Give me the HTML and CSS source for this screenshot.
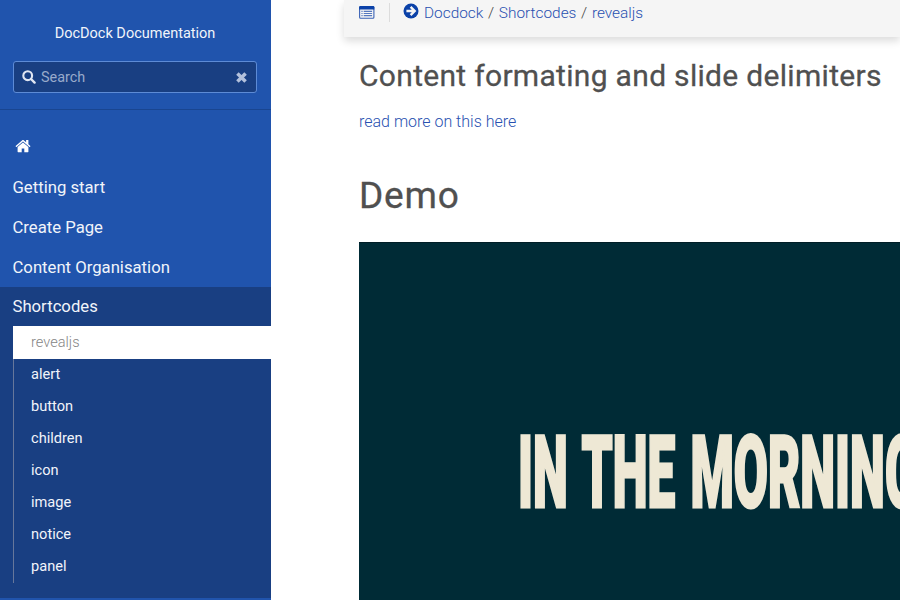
FILE: index.html
```html
<!DOCTYPE html>
<html lang="en">
<head>
<meta charset="utf-8">
<title>revealjs - DocDock Documentation</title>
<link rel="stylesheet" href="styles.css">
</head>
<body>
<div class="page">
  <aside class="sidebar">
    <header class="brand">
      <div class="brand-name">DocDock Documentation</div>
      <div class="search">
        <svg class="search-icon" viewBox="0 0 14 14"><circle cx="5.7" cy="5.7" r="4.4" fill="none" stroke="currentColor" stroke-width="2.1"/><path d="M9 9l3.6 3.6" stroke="currentColor" stroke-width="2.4" stroke-linecap="round"/></svg>
        <span class="search-text">Search</span>
        <svg class="clear-icon" viewBox="0 0 10 10"><path d="M1.3 1.3l7.4 7.4M8.7 1.3L1.3 8.7" stroke="currentColor" stroke-width="3.2"/></svg>
      </div>
    </header>
    <nav class="menu">
      <a class="menu-item"><svg class="home-icon" viewBox="0 0 16 14"><path fill="currentColor" d="M8 3.6L2.6 8v4.8c0 .3.2.5.5.5h3.6V9.6h2.6v3.7h3.6c.3 0 .5-.2.5-.5V8zM15.4 6.9L13.4 5.2V1.3c0-.2-.1-.3-.3-.3h-1.7c-.2 0-.3.1-.3.3v1.9L9 1.4c-.6-.5-1.4-.5-2 0L.6 6.9c-.1.1-.1.3 0 .4l.5.6c.1.1.3.1.4 0L8 2.5l6.5 5.4c.1.1.3.1.4 0l.5-.6c.1-.1.1-.3 0-.4z"/></svg></a>
      <a class="menu-item">Getting start</a>
      <a class="menu-item">Create Page</a>
      <a class="menu-item">Content Organisation</a>
      <div class="menu-group">
        <a class="menu-item">Shortcodes</a>
        <div class="submenu">
          <a class="sub-item active">revealjs</a>
          <a class="sub-item">alert</a>
          <a class="sub-item">button</a>
          <a class="sub-item">children</a>
          <a class="sub-item">icon</a>
          <a class="sub-item">image</a>
          <a class="sub-item">notice</a>
          <a class="sub-item">panel</a>
        </div>
      </div>
    </nav>
  </aside>
  <main class="body">
    <div class="topbar">
      <svg class="toc-icon" viewBox="0 0 16 13"><rect x=".6" y=".6" width="14.3" height="11.6" rx="1" fill="#f5f5f5" stroke="#3a62b5" stroke-width="1.1"/><path d="M.2 3.5V1.2Q.2.1 1.3.1h12.9q1.1 0 1.1 1.1v2.3z" fill="#0b41a8"/><path d="M2.4 5.3h1.2M2.4 7.5h1.2M2.4 9.7h1.2M4.7 5.3h8.4M4.7 7.5h8.4M4.7 9.7h8.4" stroke="#5678bf" stroke-width="1.2"/></svg>
      <span class="divider"></span>
      <svg class="arrow-icon" viewBox="0 0 16 16"><circle cx="8" cy="8" r="7.5" fill="#0b41a8"/><path d="M3.4 8h8M7.6 3.9L11.7 8l-4.1 4.1" fill="none" stroke="#f5f5f5" stroke-width="2.4"/></svg>
      <div class="crumbs"><a>Docdock</a><span>/</span><a>Shortcodes</a><span>/</span><a>revealjs</a></div>
    </div>
    <article class="content">
      <h2>Content formating and slide delimiters</h2>
      <p><a>read more on this here</a></p>
      <h1>Demo</h1>
      <div class="slide">
        <div class="slide-title">IN THE MORNING</div>
      </div>
    </article>
  </main>
</div>
</body>
</html>
```
FILE: styles.css
```css
* { box-sizing: border-box; }
body { margin: 0; background: #fff; font-family: Roboto, "Liberation Sans", sans-serif; overflow: hidden; }
.page { display: flex; width: 900px; height: 600px; overflow: hidden; }

.sidebar { flex: none; width: 271px; background: #2054ad; color: #f1f4fa; }
.brand { height: 110px; padding: 24px 14px 0 13px; border-bottom: 1px solid #194590; }
.brand-name { height: 37px; line-height: 20px; text-align: center; font-size: 14.5px; }
.search { display: flex; align-items: center; height: 32px; padding: 0 9px 0 8px; border: 1px solid #5d8bd6; border-radius: 3px; background: #193f82; }
.search-icon { width: 14px; height: 14px; color: #e0e6f2; }
.search-text { flex: 1; margin-left: 5px; font-size: 14.4px; color: #98aacb; }
.clear-icon { width: 11px; height: 11px; color: #b3c1dc; }

.menu { padding-top: 17px; }
.menu-item { display: flex; align-items: center; height: 40px; padding: 0 0 0 12.5px; font-size: 16.7px; }
.home-icon { width: 16px; height: 14px; margin: 0 0 2px 2.5px; color: #fff; }
.menu-group { height: 311px; background: #193f82; }
.menu-group .menu-item { height: 39px; }
.submenu { margin-left: 13px; border-left: 1px solid #66779b; }
.sub-item { display: flex; align-items: center; height: 32px; padding: 0 0 2px 17px; font-size: 14.6px; }
.sub-item.active { height: 33px; margin-left: -1px; padding-left: 18px; background: #fff; color: #858585; font-weight: 300; }

.body { flex: 1; min-width: 0; padding-left: 73px; }
.topbar { display: flex; align-items: flex-start; height: 37px; padding: 3px 0 0 15px; background: #f5f5f5; box-shadow: 0 4px 8px rgba(0, 0, 0, .14); }
.toc-icon { flex: none; width: 16px; height: 13px; margin-top: 3px; }
.divider { width: 1px; height: 19px; margin: 0 13px 0 14px; background: #dcdcdc; }
.arrow-icon { flex: none; width: 16px; height: 16px; }
.crumbs { display: flex; margin-left: 5px; line-height: 20px; font-size: 15.4px; font-weight: 300; color: #444; }
.crumbs span { margin: 0 4.7px; }
a { color: inherit; }
.crumbs a, .content a { color: #2850b0; }

.content { padding-left: 15px; }
h1, h2 { margin: 0; color: #505050; font-weight: 400; white-space: nowrap; -webkit-text-stroke: .3px #505050; }
h2 { padding-top: 21px; line-height: 36px; font-size: 30px; letter-spacing: .31px; }
p { margin: 18px 0 0; line-height: 20px; font-size: 16px; font-weight: 300; }
h1 { margin-top: 41px; line-height: 46px; font-size: 37px; letter-spacing: .8px; }
.slide { height: 360px; margin-top: 23px; padding: 170px 0 0 159px; background: #002b36; border-top: 1px solid #001d26; overflow: hidden; }
.slide-title { width: max-content; line-height: 120px; font-size: 101px; font-weight: 900; word-spacing: 6px; white-space: nowrap; color: #eee8d5; -webkit-text-stroke: 3px #eee8d5; transform: scaleX(.49); transform-origin: 0 0; }
```
